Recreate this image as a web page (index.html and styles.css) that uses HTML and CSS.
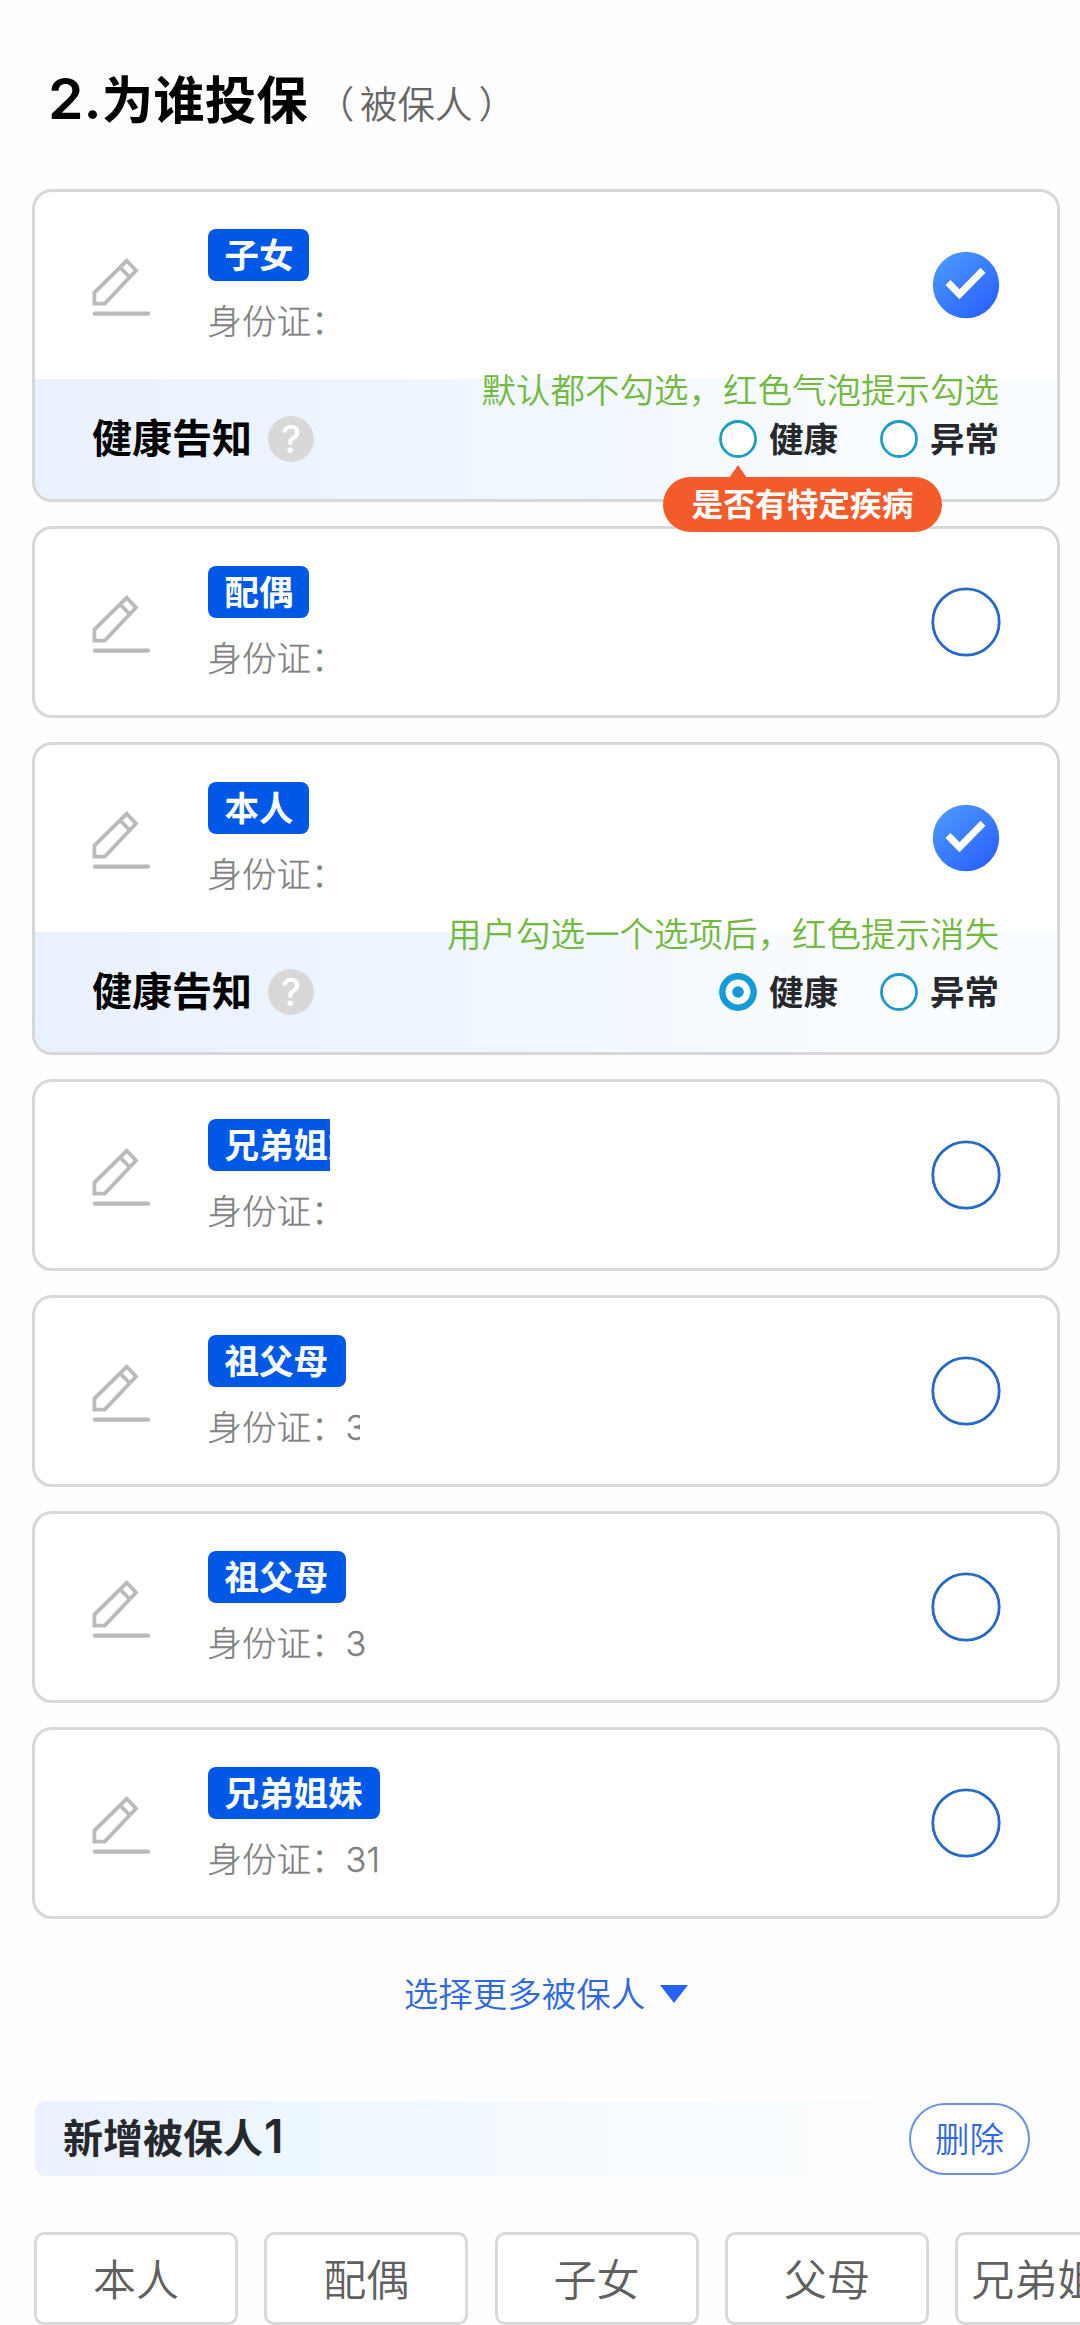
FILE: index.html
```html
<!DOCTYPE html>
<html lang="zh-CN">
<head>
<meta charset="utf-8">
<title>为谁投保</title>
<link rel="stylesheet" href="styles.css">
</head>
<body>
<svg class="defs" width="0" height="0" aria-hidden="true">
  <defs>
    <linearGradient id="blue" x1="0.15" y1="0.1" x2="0.85" y2="0.9">
      <stop offset="0" stop-color="#4a96ff"/>
      <stop offset="1" stop-color="#2a62fb"/>
    </linearGradient>
    <symbol id="edit" viewBox="0 0 60 60">
      <path d="M34.7 3.8 44 13.5 12.8 46.6H2.4V35.6Z M28.3 10.6 37.6 20" fill="none" stroke="#bababa" stroke-width="3.8"/>
      <path d="M2.8 56.7H56" fill="none" stroke="#bababa" stroke-width="4.2" stroke-linecap="round"/>
    </symbol>
    <symbol id="checked" viewBox="0 0 70 70">
      <circle cx="35" cy="35" r="33.2" fill="url(#blue)"/>
      <path d="M17 32.5 28.5 44.3 52 20.3" fill="none" stroke="#fff" stroke-width="7"/>
    </symbol>
    <symbol id="unchecked" viewBox="0 0 70 70">
      <circle cx="35" cy="35" r="33.2" fill="#fff" stroke="#2868c8" stroke-width="2.8"/>
    </symbol>
    <symbol id="radio" viewBox="0 0 38 38">
      <circle cx="19" cy="19" r="17.5" fill="#fff" stroke="#1c9cc6" stroke-width="2.8"/>
    </symbol>
    <symbol id="radio-on" viewBox="0 0 38 38">
      <circle cx="19" cy="19" r="18.9" fill="#159cd8"/>
      <circle cx="19" cy="19" r="12.4" fill="#fff"/>
      <circle cx="19" cy="19" r="5.8" fill="#159cd8"/>
    </symbol>
  </defs>
</svg>

<main class="page">
  <header class="title">
    <h1><span class="step">2.</span>为谁投保</h1>
    <span class="subtitle">（ 被保人 ）</span>
  </header>

  <section class="list">
    <article class="card">
      <div class="person">
        <svg class="edit"><use href="#edit"/></svg>
        <div class="info">
          <span class="tag tag-short">子女</span>
          <span class="idno">身份证：</span>
        </div>
        <svg class="select"><use href="#checked"/></svg>
      </div>
      <div class="health">
        <span class="health-title">健康告知</span>
        <span class="help">?</span>
        <div class="options">
          <span class="option"><svg class="radio"><use href="#radio"/></svg><span class="label">健康</span><span class="bubble">是否有特定疾病</span></span>
          <span class="option"><svg class="radio"><use href="#radio"/></svg><span class="label">异常</span></span>
        </div>
        <span class="note">默认都不勾选，红色气泡提示勾选</span>
      </div>
    </article>

    <article class="card">
      <div class="person">
        <svg class="edit"><use href="#edit"/></svg>
        <div class="info">
          <span class="tag tag-short">配偶</span>
          <span class="idno">身份证：</span>
        </div>
        <svg class="select"><use href="#unchecked"/></svg>
      </div>
    </article>

    <article class="card">
      <div class="person">
        <svg class="edit"><use href="#edit"/></svg>
        <div class="info">
          <span class="tag tag-short">本人</span>
          <span class="idno">身份证：</span>
        </div>
        <svg class="select"><use href="#checked"/></svg>
      </div>
      <div class="health">
        <span class="health-title">健康告知</span>
        <span class="help">?</span>
        <div class="options">
          <span class="option"><svg class="radio"><use href="#radio-on"/></svg><span class="label">健康</span></span>
          <span class="option"><svg class="radio"><use href="#radio"/></svg><span class="label">异常</span></span>
        </div>
        <span class="note note-high">用户勾选一个选项后，红色提示消失</span>
      </div>
    </article>

    <article class="card">
      <div class="person">
        <svg class="edit"><use href="#edit"/></svg>
        <div class="info info-narrow">
          <span class="tag">兄弟姐妹</span>
          <span class="idno">身份证：</span>
        </div>
        <svg class="select"><use href="#unchecked"/></svg>
      </div>
    </article>

    <article class="card">
      <div class="person">
        <svg class="edit"><use href="#edit"/></svg>
        <div class="info info-medium">
          <span class="tag">祖父母</span>
          <span class="idno">身份证：3</span>
        </div>
        <svg class="select"><use href="#unchecked"/></svg>
      </div>
    </article>

    <article class="card">
      <div class="person">
        <svg class="edit"><use href="#edit"/></svg>
        <div class="info">
          <span class="tag">祖父母</span>
          <span class="idno">身份证：3</span>
        </div>
        <svg class="select"><use href="#unchecked"/></svg>
      </div>
    </article>

    <article class="card">
      <div class="person">
        <svg class="edit"><use href="#edit"/></svg>
        <div class="info">
          <span class="tag">兄弟姐妹</span>
          <span class="idno">身份证：31</span>
        </div>
        <svg class="select"><use href="#unchecked"/></svg>
      </div>
    </article>
  </section>

  <div class="more">
    <span class="more-text">选择更多被保人</span>
    <svg width="28" height="18" viewBox="0 0 28 18"><path d="M0 0H28L14 18Z" fill="#2563f5"/></svg>
  </div>

  <section class="added">
    <h2>新增被保人<span class="count">1</span></h2>
    <button class="delete">删除</button>
  </section>

  <nav class="relations">
    <button>本人</button>
    <button>配偶</button>
    <button>子女</button>
    <button>父母</button>
    <button>兄弟姐妹</button>
  </nav>
</main>
</body>
</html>
```
FILE: styles.css
```css
* {
  box-sizing: border-box;
}

body {
  margin: 0;
  background: #fefefe;
  font-family: "Noto Sans CJK SC", sans-serif;
  font-weight: 350;
}

.defs {
  position: absolute;
}

.page {
  height: 2325px;
  overflow: hidden;
}

.title {
  display: flex;
  align-items: center;
  height: 189px;
  padding: 5px 0 0 48px;
}

.title h1 {
  margin: 0;
  font-size: 51.5px;
  font-weight: 700;
  line-height: 60px;
  color: #000;
}

.step {
  font-family: Inter, sans-serif;
  font-size: 57px;
  font-weight: 600;
  line-height: 1;
  letter-spacing: 0;
}

.subtitle {
  padding: 9px 0 0 9px;
  font-size: 37.5px;
  line-height: 50px;
  color: #666;
  word-spacing: -2.5px;
}

.list {
  display: flex;
  flex-direction: column;
  gap: 24px;
  padding: 0 20px 0 32px;
}

.card {
  border: 3px solid #d6d7d9;
  border-radius: 20px;
  background: #fff;
}

.person {
  display: flex;
  align-items: center;
  height: 187px;
  padding: 0 56px 1px 57px;
}

.card > .person:last-child {
  height: 186px;
  padding-bottom: 0;
}

.edit {
  width: 60px;
  height: 60px;
  margin-top: 4px;
}

.info {
  display: flex;
  flex-direction: column;
  align-items: flex-start;
  gap: 13px;
  margin-left: 55.5px;
  padding-top: 2px;
  overflow: hidden;
}

.info-narrow {
  width: 122.5px;
}

.info-medium {
  width: 152.5px;
}

.tag {
  height: 52px;
  padding: 0 17.5px 0 17px;
  border-radius: 8px;
  background: #0059e6;
  color: #fff;
  font-size: 34.5px;
  font-weight: 700;
  line-height: 49px;
  white-space: nowrap;
}

.tag-short {
  padding-right: 15px;
}

.idno {
  height: 50px;
  color: #808080;
  font-family: "Inter", "Noto Sans CJK SC", sans-serif;
  font-size: 34.5px;
  font-weight: 300;
  line-height: 55px;
  white-space: nowrap;
  -webkit-text-stroke: 0.3px #808080;
}

.select {
  width: 70px;
  height: 70px;
  margin-left: auto;
}

.health {
  position: relative;
  display: flex;
  align-items: center;
  height: 120px;
  padding: 0 58px 0 57px;
  border-radius: 0 0 17px 17px;
  background: linear-gradient(90deg, #eaf1fe, #eef6ff 40%, #fafdff 85%);
}

.health-title {
  margin-top: -7px;
  color: #000;
  font-size: 40px;
  font-weight: 700;
  line-height: 50px;
}

.help {
  width: 46px;
  height: 46px;
  margin-left: 16px;
  border-radius: 50%;
  background: #d8d8d8;
  color: #fff;
  font: 500 38px/46px Inter, sans-serif;
  text-align: center;
}

.options {
  display: flex;
  gap: 42px;
  margin-left: auto;
}

.option {
  position: relative;
  display: flex;
  align-items: center;
  gap: 12px;
  color: #26282b;
  font-size: 34.5px;
  font-weight: 700;
  line-height: 40px;
}

.label {
  margin-top: -4px;
}

.radio {
  width: 38px;
  height: 38px;
}

.bubble {
  position: absolute;
  z-index: 1;
  top: 57px;
  left: -56px;
  width: 279px;
  height: 55px;
  border-radius: 28px;
  background: #f45b2a;
  color: #fff;
  font-size: 31.7px;
  line-height: 51px;
  text-align: center;
  white-space: nowrap;
}

.bubble::before {
  content: "";
  position: absolute;
  top: -12px;
  left: 66px;
  border: solid transparent;
  border-width: 0 9px 13px;
  border-bottom-color: #f45b2a;
}

.note {
  position: absolute;
  top: -16px;
  right: 58px;
  color: #73b83f;
  font-size: 34.5px;
  line-height: 50px;
}

.note-high {
  top: -25px;
}

.more {
  display: flex;
  justify-content: center;
  align-items: center;
  gap: 15px;
  height: 50px;
  margin-top: 50px;
  padding-left: 12px;
  color: #2f68e0;
  font-size: 34.5px;
}

.more-text {
  margin-top: -4px;
}

.added {
  display: flex;
  justify-content: space-between;
  align-items: center;
  height: 75px;
  margin: 82px 35px 0;
  padding: 0 15px 0 28px;
  border-radius: 10px;
  background: linear-gradient(90deg, #ebf1fe, #edf7ff 25%, #f8fcff 60%, #fefefe);
}

.added h2 {
  margin: -6px 0 0;
  color: #25282d;
  font-size: 40px;
  font-weight: 700;
  line-height: 50px;
}

.count {
  margin-left: 1px;
  font-family: Inter, sans-serif;
  font-size: 46px;
  font-weight: 600;
  line-height: 1;
}

.delete {
  width: 121px;
  height: 72px;
  padding: 0 0 4px;
  border: 2px solid #6b92e0;
  border-radius: 36px;
  background: #fff;
  color: #2f68e0;
  font: 350 34.5px/50px "Noto Sans CJK SC", sans-serif;
}

.relations {
  display: flex;
  gap: 26.3px;
  margin: 56px 0 0 34px;
}

.relations button {
  flex: 0 0 204px;
  height: 93px;
  padding: 0 0 3px;
  border: 3px solid #d9d9d9;
  border-radius: 10px;
  background: #fff;
  color: #606060;
  font: 350 43px/60px "Noto Sans CJK SC", sans-serif;
  white-space: nowrap;
}
```
